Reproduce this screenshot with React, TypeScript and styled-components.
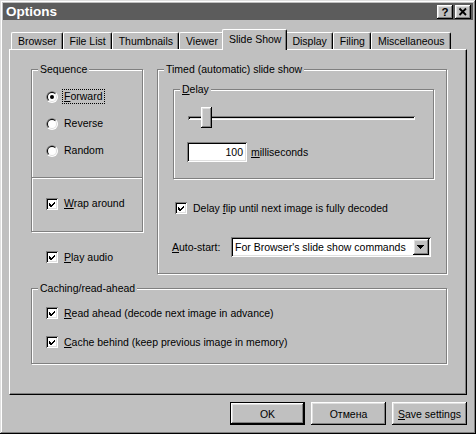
import React from 'react';
import styled, { createGlobalStyle } from 'styled-components';

const FACE = '#c0c0c0';
const RAISED =
  'inset -1px -1px #000, inset 1px 1px #fff, inset -2px -2px #808080, inset 2px 2px #dfdfdf';
const SUNKEN =
  'inset 1px 1px #808080, inset -1px -1px #fff, inset 2px 2px #000, inset -2px -2px #dfdfdf';

const TABS = ['Browser', 'File List', 'Thumbnails', 'Viewer', 'Slide Show', 'Display', 'Filing', 'Miscellaneous'];

const GlobalStyle = createGlobalStyle`
  html, body {
    margin: 0;
    padding: 0;
    background: ${FACE};
  }
  body {
    font-family: "Liberation Sans", Arial, sans-serif;
    font-size: 10.5px;
    color: #000;
  }
  u {
    text-decoration: underline;
    text-underline-offset: 1px;
  }
`;

const Radio: React.FC<{ checked?: boolean }> = ({ checked }) => (
  <RadioMark width="12" height="12" viewBox="0 0 12 12">
    <circle cx="6" cy="6" r="6" fill="#fff" />
    <path d="M1.757 10.243A6 6 0 0 1 10.243 1.757Z" fill="#808080" />
    <circle cx="6" cy="6" r="5" fill="#dfdfdf" />
    <path d="M2.464 9.536A5 5 0 0 1 9.536 2.464Z" fill="#000" />
    <circle cx="6" cy="6" r="4" fill="#fff" />
    {checked && <circle cx="6" cy="6" r="2" fill="#000" />}
  </RadioMark>
);

const Check: React.FC = () => (
  <CheckBox>
    <svg width="12" height="12" viewBox="0 0 12 12" shapeRendering="crispEdges">
      <path d="M3 5L5 7L9 3L9 5.5L5 9.5L3 7.5Z" fill="#000" />
    </svg>
  </CheckBox>
);

const App: React.FC = () => {
  return (
    <>
      <GlobalStyle />
      <Window>
        <TitleBar>
          <Title>Options</Title>
          <CaptionButtons>
            <CaptionButton>?</CaptionButton>
            <CaptionButton>
              <svg width="16" height="14" viewBox="0 0 16 14">
                <path d="M4.5 3.5L11 10M11 3.5L4.5 10" stroke="#000" strokeWidth="1.8" />
              </svg>
            </CaptionButton>
          </CaptionButtons>
        </TitleBar>

        <Body>
          <TabStrip>
            {TABS.map((t) => (
              <Tab key={t} $active={t === 'Slide Show'}>
                {t}
              </Tab>
            ))}
          </TabStrip>

          <Panel>
            <TopRow>
              <LeftColumn>
                <GroupBox $pad="0">
                  <Legend>Sequence</Legend>
                  <OptionList>
                    <OptionRow>
                      <Radio checked />
                      <ControlLabel $focused>
                        <u>F</u>orward
                      </ControlLabel>
                    </OptionRow>
                    <OptionRow>
                      <Radio />
                      <ControlLabel>Reverse</ControlLabel>
                    </OptionRow>
                    <OptionRow>
                      <Radio />
                      <ControlLabel>Random</ControlLabel>
                    </OptionRow>
                  </OptionList>
                  <Divider />
                  <WrapSection>
                    <OptionRow>
                      <Check />
                      <ControlLabel>
                        <u>W</u>rap around
                      </ControlLabel>
                    </OptionRow>
                  </WrapSection>
                </GroupBox>

                <PlayRow>
                  <Check />
                  <ControlLabel>
                    <u>P</u>lay audio
                  </ControlLabel>
                </PlayRow>
              </LeftColumn>

              <GroupBox $pad="19px 12px 16px 15px">
                <Legend>Timed (automatic) slide show</Legend>
                <GroupBox $pad="17px 18px 16px 13px">
                  <Legend>
                    <u>D</u>elay
                  </Legend>
                  <SliderRow>
                    <Track />
                    <Thumb style={{ left: 13 }} />
                  </SliderRow>
                  <EditRow>
                    <EditBox>100</EditBox>
                    <ControlLabel>
                      <u>m</u>illiseconds
                    </ControlLabel>
                  </EditRow>
                </GroupBox>

                <FlipRow>
                  <Check />
                  <ControlLabel>
                    Delay <u>f</u>lip until next image is fully decoded
                  </ControlLabel>
                </FlipRow>

                <ComboRow>
                  <ComboLabel>
                    <u>A</u>uto-start:
                  </ComboLabel>
                  <Combo>
                    <ComboText>For Browser's slide show commands</ComboText>
                    <DropButton>
                      <svg width="16" height="16" viewBox="0 0 16 16" shapeRendering="crispEdges">
                        <path d="M4 6h7l-3.5 4z" fill="#000" />
                      </svg>
                    </DropButton>
                  </Combo>
                </ComboRow>
              </GroupBox>
            </TopRow>

            <GroupBox $pad="14px 0 11px 14px" style={{ marginTop: 14 }}>
              <Legend>Caching/read-ahead</Legend>
              <CacheList>
                <OptionRow $h={20}>
                  <Check />
                  <ControlLabel>
                    <u>R</u>ead ahead (decode next image in advance)
                  </ControlLabel>
                </OptionRow>
                <OptionRow $h={20}>
                  <Check />
                  <ControlLabel>
                    <u>C</u>ache behind (keep previous image in memory)
                  </ControlLabel>
                </OptionRow>
              </CacheList>
            </GroupBox>
          </Panel>

          <ButtonRow>
            <PushButton $default $width={75}>OK</PushButton>
            <PushButton $width={75}>Отмена</PushButton>
            <PushButton $width={75}>
              <u>S</u>ave settings
            </PushButton>
          </ButtonRow>
        </Body>
      </Window>
    </>
  );
};

const Window = styled.div`
  width: 476px;
  height: 434px;
  box-sizing: border-box;
  padding: 3px;
  background: ${FACE};
  box-shadow: inset -1px -1px #000, inset 1px 1px #dfdfdf, inset -2px -2px #808080, inset 2px 2px #fff;
  display: flex;
  flex-direction: column;
`;

const TitleBar = styled.div`
  height: 17px;
  display: flex;
  align-items: center;
  justify-content: space-between;
  padding: 0 2px 0 3px;
  background: #5c5c5c;
`;

const Title = styled.span`
  color: #fff;
  font-weight: bold;
  font-size: 13.5px;
  line-height: 17px;
`;

const CaptionButtons = styled.div`
  display: flex;
  gap: 2px;
`;

const CaptionButton = styled.div`
  width: 16px;
  height: 14px;
  display: flex;
  align-items: center;
  justify-content: center;
  background: ${FACE};
  box-shadow: ${RAISED};
  font-weight: bold;
  font-size: 11.5px;
  line-height: 14px;
`;

const Body = styled.div`
  padding: 9px 6px 0;
  display: flex;
  flex-direction: column;
`;

const TabStrip = styled.div`
  height: 20px;
  display: flex;
  align-items: flex-end;
  padding-left: 2px;
`;

const Tab = styled.div<{ $active?: boolean }>`
  position: relative;
  z-index: ${(p) => (p.$active ? 2 : 1)};
  box-sizing: border-box;
  height: ${(p) => (p.$active ? 21 : 17)}px;
  margin: 0 ${(p) => (p.$active ? -2 : 0)}px ${(p) => (p.$active ? -1 : 0)}px;
  padding: 0 5px ${(p) => (p.$active ? 3 : 0)}px 6px;
  display: flex;
  align-items: center;
  white-space: nowrap;
  background: ${FACE};
  border-top: 1px solid #fff;
  border-left: 1px solid #fff;
  border-right: 1px solid #000;
  border-radius: 2px 2px 0 0;
  box-shadow: inset -1px 0 #808080;
`;

const Panel = styled.div`
  height: 346px;
  box-sizing: border-box;
  padding: 19px 19px 0 21px;
  border-top: 1px solid #fff;
  border-left: 1px solid #fff;
  border-right: 1px solid #000;
  border-bottom: 1px solid #000;
  box-shadow: inset -1px -1px #808080;
`;

const TopRow = styled.div`
  display: grid;
  grid-template-columns: 112px 1fr;
  column-gap: 14px;
  align-items: start;
`;

const LeftColumn = styled.div`
  display: flex;
  flex-direction: column;
`;

const GroupBox = styled.div<{ $pad: string }>`
  position: relative;
  border: 1px solid #808080;
  box-shadow: inset 1px 1px #fff, 1px 1px #fff;
  padding: ${(p) => p.$pad};
  display: flex;
  flex-direction: column;
`;

const Legend = styled.span`
  position: absolute;
  top: -7px;
  left: 6px;
  padding: 0 2px;
  line-height: 13px;
  background: ${FACE};
  white-space: nowrap;
`;

const OptionList = styled.div`
  padding: 13px 0 0 14px;
  display: flex;
  flex-direction: column;
`;

const OptionRow = styled.div<{ $h?: number }>`
  height: ${(p) => p.$h ?? 27}px;
  display: flex;
  align-items: center;
  gap: 4px;
`;

const Divider = styled.div`
  margin-top: 13px;
  border-top: 1px solid #808080;
  border-bottom: 1px solid #fff;
`;

const WrapSection = styled.div`
  padding: 11px 0 14px 14px;
`;

const PlayRow = styled(OptionRow)`
  height: 20px;
  margin: 15px 0 0 15px;
`;

const RadioMark = styled.svg`
  flex: none;
  display: block;
`;

const CheckBox = styled.span`
  flex: none;
  width: 12px;
  height: 12px;
  background: #fff;
  box-shadow: ${SUNKEN};
  display: block;

  svg {
    display: block;
  }
`;

const ControlLabel = styled.span<{ $focused?: boolean }>`
  padding: 0 1px;
  line-height: 13px;
  border: 1px dotted ${(p) => (p.$focused ? '#000' : 'transparent')};
  white-space: nowrap;
`;

const SliderRow = styled.div`
  position: relative;
  height: 21px;
  margin-left: 1px;
  display: flex;
  align-items: center;
`;

const Track = styled.div`
  flex: 1;
  height: 4px;
  box-shadow: ${SUNKEN};
`;

const Thumb = styled.div`
  position: absolute;
  top: 0;
  width: 11px;
  height: 21px;
  background: ${FACE};
  box-shadow: ${RAISED};
`;

const EditRow = styled.div`
  margin-top: 14px;
  display: flex;
  align-items: center;
  gap: 2px;
`;

const EditBox = styled.div`
  width: 60px;
  height: 20px;
  box-sizing: border-box;
  padding-right: 4px;
  background: #fff;
  box-shadow: ${SUNKEN};
  display: flex;
  align-items: center;
  justify-content: flex-end;
`;

const FlipRow = styled(OptionRow)`
  height: 20px;
  margin: 19px 0 0 2px;
`;

const ComboRow = styled.div`
  height: 20px;
  margin: 19px 0 0 -1px;
  display: flex;
  align-items: center;
`;

const ComboLabel = styled.span`
  width: 59px;
  flex: none;
  white-space: nowrap;
`;

const Combo = styled.div`
  width: 200px;
  height: 20px;
  box-sizing: border-box;
  padding: 2px 2px 2px 4px;
  background: #fff;
  box-shadow: ${SUNKEN};
  display: flex;
  align-items: center;
`;

const ComboText = styled.span`
  flex: 1;
  white-space: nowrap;
  overflow: hidden;
`;

const DropButton = styled.div`
  width: 16px;
  height: 16px;
  background: ${FACE};
  box-shadow: ${RAISED};
`;

const CacheList = styled.div`
  display: flex;
  flex-direction: column;
  gap: 9px;
`;

const ButtonRow = styled.div`
  margin-top: 7px;
  display: flex;
  justify-content: flex-end;
  gap: 6px;
`;

const PushButton = styled.div<{ $default?: boolean; $width: number }>`
  width: ${(p) => p.$width}px;
  height: 23px;
  box-sizing: border-box;
  display: flex;
  align-items: center;
  justify-content: center;
  background: ${FACE};
  border: ${(p) => (p.$default ? '1px solid #000' : 'none')};
  box-shadow: ${RAISED};
  white-space: nowrap;
`;

export default App;
